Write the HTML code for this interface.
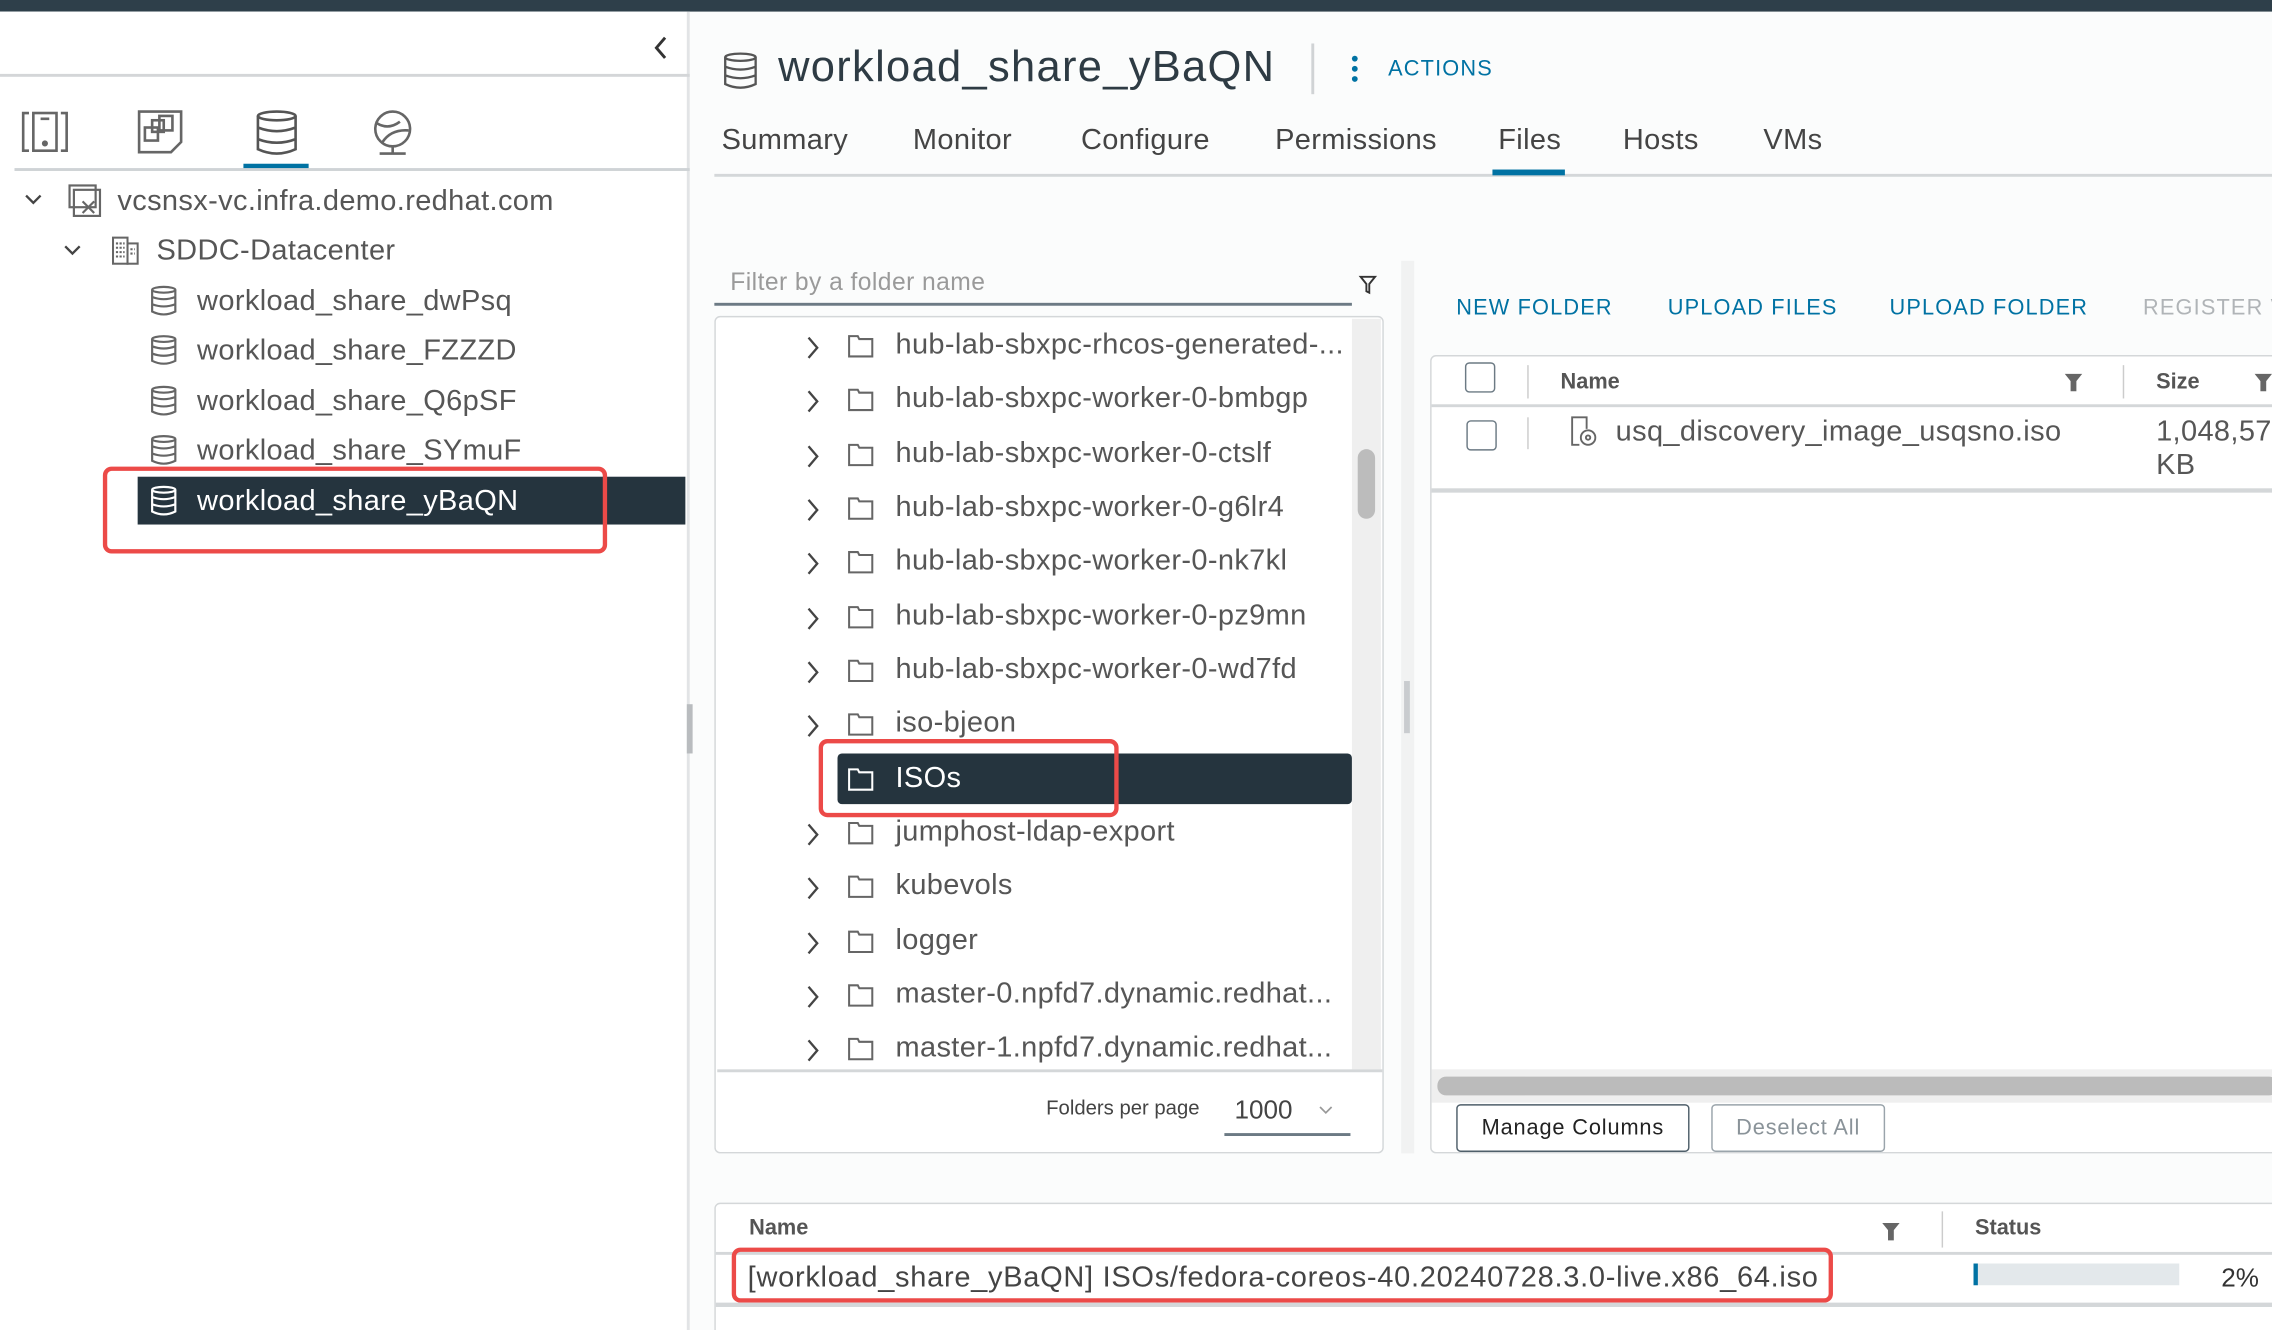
<!DOCTYPE html>
<html><head><meta charset="utf-8"><style>
*{box-sizing:border-box;margin:0;padding:0}
html,body{width:2272px;height:1330px;overflow:hidden;background:#fff}
#s{position:absolute;left:0;top:0;width:1568px;height:918px;transform:scale(1.44898);transform-origin:0 0;font-family:"Liberation Sans",sans-serif;background:#fbfcfc;overflow:hidden}
.a{position:absolute;white-space:nowrap}
.t{font-size:20px;letter-spacing:.25px;color:#565656}
.sel{background:#25343e}
.blue{color:#0072a3;font-size:15px;letter-spacing:.8px}
.red{position:absolute;border:3px solid #ec4a48;border-radius:6px}
svg{position:absolute;overflow:visible}
</style></head><body><div id="s">
<div class="a" style="left:0;top:0;width:1568px;height:8px;background:#2e3f4a"></div>
<div class="a" style="left:0;top:8px;width:476px;height:910px;background:#fff;border-right:2px solid #e2e4e6"></div>
<div class="a" style="left:474px;top:486px;width:4px;height:34px;background:#b9bcbf"></div>
<svg style="left:450px;top:25px" width="12" height="16"><path d="M9 1 L3 8 L9 15" fill="none" stroke="#333" stroke-width="2"/></svg>
<div class="a" style="left:0;top:51px;width:476px;height:2px;background:#d4d6d8"></div>
<svg style="left:15px;top:76px" width="32" height="30"><g fill="none" stroke="#666" stroke-width="1.8"><path d="M5 2H1V28H5M27 2H31V28H27"/><rect x="8" y="2" width="16" height="26"/><path d="M13 6h6"/><circle cx="16" cy="23" r="1.2" fill="#666"/></g></svg>
<svg style="left:95px;top:76px" width="32" height="30"><g fill="none" stroke="#666" stroke-width="1.8"><path d="M1 1H30V22L23 29H1Z"/><rect x="5" y="12" width="9" height="9"/><rect x="10" y="7" width="8" height="8"/><rect x="15" y="4" width="9" height="10"/></g></svg>
<svg style="left:176px;top:76px" width="30" height="32"><g fill="none" stroke="#555" stroke-width="1.8"><ellipse cx="15" cy="4" rx="13" ry="3"/><path d="M2 4V27Q15 33 28 27V4M2 12Q15 17 28 12M2 20Q15 25 28 20"/></g></svg>
<div class="a" style="left:168px;top:113px;width:45px;height:4px;background:#0072a3"></div>
<svg style="left:256px;top:76px" width="30" height="32"><g fill="none" stroke="#666" stroke-width="1.8"><circle cx="15" cy="13" r="12"/><path d="M4 9Q12 14 20 8M8 22Q14 13 26 14M6 30H24M15 25V30"/></g></svg>
<div class="a" style="left:10px;top:116px;width:466px;height:2px;background:#cfd3d6"></div>
<svg style="left:17px;top:134px" width="12" height="8"><path d="M1 1L6 6L11 1" fill="none" stroke="#444" stroke-width="1.6"/></svg>
<svg style="left:47px;top:127px" width="24" height="24"><g fill="none" stroke="#666" stroke-width="1.5"><rect x="1" y="1" width="18" height="15"/><rect x="4" y="4" width="18" height="18"/><path d="M10 12l8 8M18 12l-8 8"/></g></svg>
<div class="a t" style="left:81px;top:128px">vcsnsx-vc.infra.demo.redhat.com</div>
<svg style="left:44px;top:169px" width="12" height="8"><path d="M1 1L6 6L11 1" fill="none" stroke="#444" stroke-width="1.6"/></svg>
<svg style="left:77px;top:163px" width="20" height="20"><g fill="none" stroke="#666" stroke-width="1.4"><rect x="1" y="1" width="10" height="18"/><rect x="11" y="5" width="7" height="14"/><path d="M3 5h6M3 8h6M3 11h6M3 14h6M13 9h3M13 12h3" stroke-dasharray="1.5 1"/></g></svg>
<div class="a t" style="left:108px;top:162px">SDDC-Datacenter</div>
<div class="a sel" style="left:95px;top:329px;width:378px;height:33px"></div>
<div class="red" style="left:71px;top:322px;width:348px;height:60px"></div>
<div id="ds"></div>
<svg style="left:499px;top:36px" width="24" height="26"><g fill="none" stroke="#555" stroke-width="1.6"><ellipse cx="12" cy="3.5" rx="10.5" ry="2.5"/><path d="M1.5 3.5V22Q12 27 22.5 22V3.5M1.5 10Q12 14 22.5 10M1.5 16Q12 20 22.5 16"/></g></svg>
<div class="a" style="left:537px;top:30px;font-size:30px;letter-spacing:.9px;color:#2e3b44">workload_share_yBaQN</div>
<div class="a" style="left:905px;top:30px;width:2px;height:35px;background:#d0d3d5"></div>
<svg style="left:932px;top:38px" width="6" height="20"><g fill="#0072a3"><circle cx="3" cy="2.5" r="2"/><circle cx="3" cy="9.5" r="2"/><circle cx="3" cy="16.5" r="2"/></g></svg>
<div class="a blue" style="left:958px;top:39px">ACTIONS</div>
<div class="a" style="left:493px;top:120px;width:1075px;height:2px;background:#d4d7d9"></div>
<div class="a t" style="left:498px;top:86px;color:#444">Summary</div>
<div class="a t" style="left:630px;top:86px;color:#444">Monitor</div>
<div class="a t" style="left:746px;top:86px;color:#444">Configure</div>
<div class="a t" style="left:880px;top:86px;color:#444">Permissions</div>
<div class="a t" style="left:1034px;top:86px;color:#444">Files</div>
<div class="a t" style="left:1120px;top:86px;color:#444">Hosts</div>
<div class="a t" style="left:1217px;top:86px;color:#444">VMs</div>
<div class="a" style="left:1030px;top:117px;width:50px;height:4px;background:#0072a3"></div>
<div class="a" style="left:504px;top:185px;font-size:17px;letter-spacing:.3px;color:#9a9a9a">Filter by a folder name</div>
<div class="a" style="left:493px;top:209px;width:440px;height:2px;background:#6c7a84"></div>
<svg style="left:938px;top:190px" width="12" height="13"><path d="M1 1H11L7 6V12L5 11V6Z" fill="none" stroke="#333" stroke-width="1.3"/></svg>
<div class="a" style="left:493px;top:218px;width:462px;height:578px;border:1.5px solid #d4d7d9;border-radius:4px;background:#fff"></div>
<div class="a" style="left:933px;top:220px;width:20px;height:518px;background:#efefef"></div>
<div class="a" style="left:937px;top:310px;width:12px;height:48px;background:#bcbcbc;border-radius:6px"></div>
<div class="a sel" style="left:578px;top:520px;width:355px;height:35px;border-radius:3px"></div>
<div class="red" style="left:565px;top:510px;width:207px;height:54px"></div>
<div id="fr"></div>
<div class="a" style="left:495px;top:738px;width:459px;height:2px;background:#d4d7d9"></div>
<div class="a" style="left:722px;top:756px;font-size:14px;color:#444">Folders per page</div>
<div class="a" style="left:852px;top:756px;font-size:18px;color:#444">1000</div>
<svg style="left:910px;top:763px" width="10" height="7"><path d="M1 1L5 5L9 1" fill="none" stroke="#999" stroke-width="1.2"/></svg>
<div class="a" style="left:845px;top:782px;width:87px;height:2px;background:#6c7a84"></div>
<div class="a" style="left:967px;top:180px;width:9px;height:616px;background:#f1f2f2"></div>
<div class="a" style="left:969px;top:470px;width:4px;height:36px;background:#c9cccf"></div>
<div class="a blue" style="left:1005px;top:204px">NEW FOLDER</div>
<div class="a blue" style="left:1151px;top:204px">UPLOAD FILES</div>
<div class="a blue" style="left:1304px;top:204px">UPLOAD FOLDER</div>
<div class="a blue" style="left:1479px;top:204px;color:#b0b4b7">REGISTER VM</div>
<div class="a" style="left:987px;top:245px;width:600px;height:551px;border:1.5px solid #d4d7d9;border-radius:4px;background:#fff"></div>
<div class="a" style="left:1011px;top:250px;width:21px;height:21px;border:1.5px solid #6c7a84;border-radius:3px"></div>
<div class="a" style="left:1054px;top:252px;width:1px;height:23px;background:#ccc"></div>
<div class="a" style="left:1077px;top:255px;font-size:15px;font-weight:bold;color:#555">Name</div>
<svg style="left:1425px;top:258px" width="12" height="12"><path d="M0 0H12L8 5V12H4V5Z" fill="#666"/></svg>
<div class="a" style="left:1465px;top:252px;width:1px;height:23px;background:#ccc"></div>
<div class="a" style="left:1488px;top:255px;font-size:15px;font-weight:bold;color:#555">Size</div>
<svg style="left:1556px;top:258px" width="12" height="12"><path d="M0 0H12L8 5V12H4V5Z" fill="#666"/></svg>
<div class="a" style="left:988px;top:279px;width:580px;height:1.5px;background:#d4d7d9"></div>
<div class="a" style="left:1012px;top:290px;width:21px;height:21px;border:1.5px solid #6c7a84;border-radius:3px"></div>
<div class="a" style="left:1054px;top:288px;width:1px;height:22px;background:#ccc"></div>
<svg style="left:1084px;top:287px" width="20" height="22"><g fill="none" stroke="#666" stroke-width="1.3"><path d="M6 20H1V1H11V9"/><circle cx="12" cy="15" r="5"/><circle cx="12" cy="15" r="1.5"/></g></svg>
<div class="a t" style="left:1115px;top:287px">usq_discovery_image_usqsno.iso</div>
<div class="a t" style="left:1488px;top:287px">1,048,576</div>
<div class="a t" style="left:1488px;top:310px">KB</div>
<div class="a" style="left:988px;top:337px;width:580px;height:3px;background:#d4d7d9"></div>
<div class="a" style="left:988px;top:738px;width:580px;height:23px;background:#efefef"></div>
<div class="a" style="left:992px;top:743px;width:580px;height:13px;background:#bbb;border-radius:6px"></div>
<div class="a" style="left:1005px;top:762px;width:161px;height:33px;border:1.5px solid #4f5f6a;border-radius:3px;font-size:15px;color:#222;text-align:center;line-height:31px;letter-spacing:.6px">Manage Columns</div>
<div class="a" style="left:1181px;top:762px;width:120px;height:33px;border:1.5px solid #9aa4ab;border-radius:3px;font-size:15px;color:#8a9399;text-align:center;line-height:31px;letter-spacing:.6px">Deselect All</div>
<div class="a" style="left:493px;top:830px;width:1100px;height:100px;border:1.5px solid #d4d7d9;border-radius:4px;background:#fff"></div>
<div class="a" style="left:517px;top:839px;font-size:15px;font-weight:bold;color:#555">Name</div>
<svg style="left:1299px;top:844px" width="12" height="12"><path d="M0 0H12L8 5V12H4V5Z" fill="#666"/></svg>
<div class="a" style="left:1340px;top:836px;width:1px;height:25px;background:#ccc"></div>
<div class="a" style="left:1363px;top:839px;font-size:15px;font-weight:bold;color:#555">Status</div>
<div class="a" style="left:494px;top:864px;width:1074px;height:1.5px;background:#d4d7d9"></div>
<div class="a t" style="left:516px;top:871px;color:#444;letter-spacing:.5px">[workload_share_yBaQN] ISOs/fedora-coreos-40.20240728.3.0-live.x86_64.iso</div>
<div class="red" style="left:505px;top:861px;width:760px;height:38px"></div>
<div class="a" style="left:1362px;top:872px;width:142px;height:15px;background:#e3e8eb"></div>
<div class="a" style="left:1362px;top:872px;width:3px;height:15px;background:#0072a3"></div>
<div class="a" style="left:1533px;top:872px;font-size:18px;color:#333">2%</div>
<div class="a" style="left:494px;top:899px;width:1074px;height:3px;background:#d4d7d9"></div>
<script>
var d='<g fill="none" stroke="#666" stroke-width="1.5"><ellipse cx="9" cy="3" rx="8" ry="2"/><path d="M1 3V18Q9 22 17 18V3M1 8Q9 11 17 8M1 13Q9 16 17 13"/></g>';
var n=["dwPsq","FZZZD","Q6pSF","SYmuF","yBaQN"],y=[208,242,277,311,346],h="";
n.forEach(function(s,i){var w=i==4,c=w?"#fff":"#565656";h+='<svg style="left:104px;top:'+(y[i]-11)+'px" width="18" height="22">'+d.replace(/#666/g,w?"#fff":"#666")+'</svg><div class="a t" style="left:136px;top:'+(y[i]-11)+'px;color:'+c+'">workload_share_'+s+'</div>';});
document.getElementById('ds').outerHTML=h;
var f=["hub-lab-sbxpc-rhcos-generated-...","hub-lab-sbxpc-worker-0-bmbgp","hub-lab-sbxpc-worker-0-ctslf","hub-lab-sbxpc-worker-0-g6lr4","hub-lab-sbxpc-worker-0-nk7kl","hub-lab-sbxpc-worker-0-pz9mn","hub-lab-sbxpc-worker-0-wd7fd","iso-bjeon","ISOs","jumphost-ldap-export","kubevols","logger","master-0.npfd7.dynamic.redhat...","master-1.npfd7.dynamic.redhat..."];
var fy=[238,275,313,350,387,425,462,499,537,574,611,649,686,723];h="";
f.forEach(function(s,i){var w=i==8,c=w?"#fff":"#565656",Y=fy[i];
if(!w)h+='<svg style="left:556px;top:'+(Y-6)+'px" width="10" height="16"><path d="M2 1L8 8L2 15" fill="none" stroke="#444" stroke-width="1.6"/></svg>';
h+='<svg style="left:585px;top:'+(Y-8)+'px" width="18" height="17"><path d="M1 2H7L8 4H17V16H1Z" fill="none" stroke="'+(w?"#fff":"#666")+'" stroke-width="1.4"/></svg><div class="a t" style="left:618px;top:'+(Y-11)+'px;color:'+c+'">'+s+'</div>';});
document.getElementById('fr').outerHTML=h;
</script>
</div></body></html>
